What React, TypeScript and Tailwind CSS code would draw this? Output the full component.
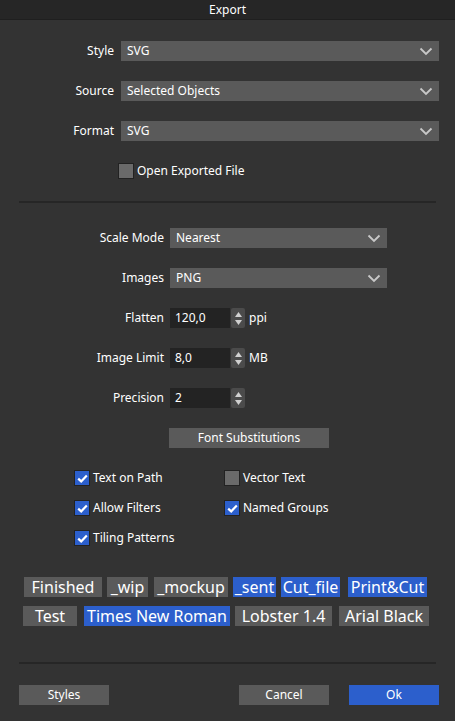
import * as React from "react";

const FONT = { fontFamily: '"Noto Sans", "Open Sans", sans-serif' };

function Chevron() {
  return (
    <svg width="14" height="9" viewBox="0 0 14 9" className="shrink-0">
      <path d="M1.5 1.5 L7 7 L12.5 1.5" fill="none" stroke="#c8c8c8" strokeWidth={1.8} />
    </svg>
  );
}

function Select({ value, width }: { value: string; width: string }) {
  return (
    <div className={`flex h-[20px] items-center justify-between bg-[#5a5a5a] pl-[6px] pr-[6px] text-[12px] text-white ${width}`}>
      <span>{value}</span>
      <Chevron />
    </div>
  );
}

function Spinner() {
  return (
    <div className="ml-px flex h-[20px] w-[14px] flex-col items-center justify-center gap-[3px] rounded-[2px] bg-[#4b4b4b]">
      <svg width="7" height="5" viewBox="0 0 7 5">
        <path d="M0 5 L3.5 0 L7 5 Z" fill="#d0d0d0" />
      </svg>
      <svg width="7" height="5" viewBox="0 0 7 5">
        <path d="M0 0 L3.5 5 L7 0 Z" fill="#d0d0d0" />
      </svg>
    </div>
  );
}

function Box({ checked }: { checked: boolean }) {
  return (
    <div
      className={`flex h-[16px] w-[16px] shrink-0 items-center justify-center border border-[#222222] ${
        checked ? "bg-[#2c5fcc]" : "bg-[#6a6a6a]"
      }`}
    >
      {checked && (
        <svg width="11" height="9" viewBox="0 0 11 9">
          <path d="M1.2 4.6 L4.2 7.4 L9.8 1.4" fill="none" stroke="#ffffff" strokeWidth={2.2} />
        </svg>
      )}
    </div>
  );
}

function Check({ label, checked }: { label: string; checked: boolean }) {
  return (
    <div className="flex h-[16px] items-center gap-[3px] text-[12px] text-white">
      <Box checked={checked} />
      <span>{label}</span>
    </div>
  );
}

function Tag({ label, blue, w }: { label: string; blue?: boolean; w: string }) {
  return (
    <div
      className={`flex h-[20px] items-center justify-center text-[16px] leading-none text-white ${w} ${
        blue ? "bg-[#2c5fcc]" : "bg-[#5a5a5a]"
      }`}
    >
      {label}
    </div>
  );
}

function Row1({ label, value }: { label: string; value: string }) {
  return (
    <div className="flex h-[20px] items-center">
      <div className="w-[115px] pr-px text-right text-[12px] text-white">{label}</div>
      <div className="ml-[6px]">
        <Select value={value} width="w-[318px]" />
      </div>
    </div>
  );
}

function Row2({ label, children }: { label: string; children: React.ReactNode }) {
  return (
    <div className="flex h-[20px] items-center">
      <div className="w-[166px] pr-[2px] text-right text-[12px] text-white">{label}</div>
      <div className="ml-[4px] flex items-center">{children}</div>
    </div>
  );
}

function NumField({ value, unit }: { value: string; unit?: string }) {
  return (
    <>
      <div className="flex h-[20px] w-[60px] items-center bg-[#232323] pl-[5px] text-[12px] text-white">
        {value}
      </div>
      <Spinner />
      {unit && <span className="ml-[4px] text-[12px] text-white">{unit}</span>}
    </>
  );
}

export default function App() {
  return (
    <div className="h-[721px] w-[455px] overflow-hidden bg-[#333333] select-none" style={FONT}>
      <div className="flex h-[20px] items-center justify-center border-b border-[#1f1f1f] bg-[#262626] text-[12px] text-white">
        Export
      </div>

      <div className="flex flex-col gap-[20px] pt-[21px]">
        <Row1 label="Style" value="SVG" />
        <Row1 label="Source" value="Selected Objects" />
        <Row1 label="Format" value="SVG" />
      </div>

      <div className="mt-[22px] pl-[118px]">
        <Check label="Open Exported File" checked={false} />
      </div>

      <div className="mx-[19px] mt-[22px] h-[2px] bg-[#262626]" />

      <div className="mt-[25px] flex flex-col gap-[20px]">
        <Row2 label="Scale Mode">
          <Select value="Nearest" width="w-[217px]" />
        </Row2>
        <Row2 label="Images">
          <Select value="PNG" width="w-[217px]" />
        </Row2>
        <Row2 label="Flatten">
          <NumField value="120,0" unit="ppi" />
        </Row2>
        <Row2 label="Image Limit">
          <NumField value="8,0" unit="MB" />
        </Row2>
        <Row2 label="Precision">
          <NumField value="2" />
        </Row2>
      </div>

      <div className="mt-[20px] pl-[169px]">
        <div className="flex h-[20px] w-[160px] items-center justify-center bg-[#5a5a5a] text-[12px] text-white">
          Font Substitutions
        </div>
      </div>

      <div className="mt-[22px] grid grid-cols-[150px_1fr] gap-y-[14px] pl-[74px]">
        <Check label="Text on Path" checked />
        <Check label="Vector Text" checked={false} />
        <Check label="Allow Filters" checked />
        <Check label="Named Groups" checked />
        <Check label="Tiling Patterns" checked />
      </div>

      <div className="mt-[31px] flex flex-col gap-[9px]">
        <div className="flex pl-[24px]">
          <Tag label="Finished" w="w-[78px]" />
          <div className="ml-[5px]"><Tag label="_wip" w="w-[41px]" /></div>
          <div className="ml-[6px]"><Tag label="_mockup" w="w-[74px]" /></div>
          <div className="ml-[5px]"><Tag label="_sent" blue w="w-[43px]" /></div>
          <div className="ml-[5px]"><Tag label="Cut_file" blue w="w-[59px]" /></div>
          <div className="ml-[8px]"><Tag label="Print&Cut" blue w="w-[79px]" /></div>
        </div>
        <div className="flex pl-[23px]">
          <Tag label="Test" w="w-[54px]" />
          <div className="ml-[7px]"><Tag label="Times New Roman" blue w="w-[146px]" /></div>
          <div className="ml-[5px]"><Tag label="Lobster 1.4" w="w-[97px]" /></div>
          <div className="ml-[7px]"><Tag label="Arial Black" w="w-[90px]" /></div>
        </div>
      </div>

      <div className="mx-[19px] mt-[36px] h-[2px] bg-[#262626]" />

      <div className="mt-[21px] flex px-[16px] pl-[19px]">
        <div className="flex h-[20px] w-[90px] items-center justify-center bg-[#5a5a5a] text-[12px] text-white">
          Styles
        </div>
        <div className="ml-auto flex gap-[20px]">
          <div className="flex h-[20px] w-[90px] items-center justify-center bg-[#5a5a5a] text-[12px] text-white">
            Cancel
          </div>
          <div className="flex h-[20px] w-[90px] items-center justify-center bg-[#2c5fcc] text-[12px] text-white">
            Ok
          </div>
        </div>
      </div>
    </div>
  );
}
